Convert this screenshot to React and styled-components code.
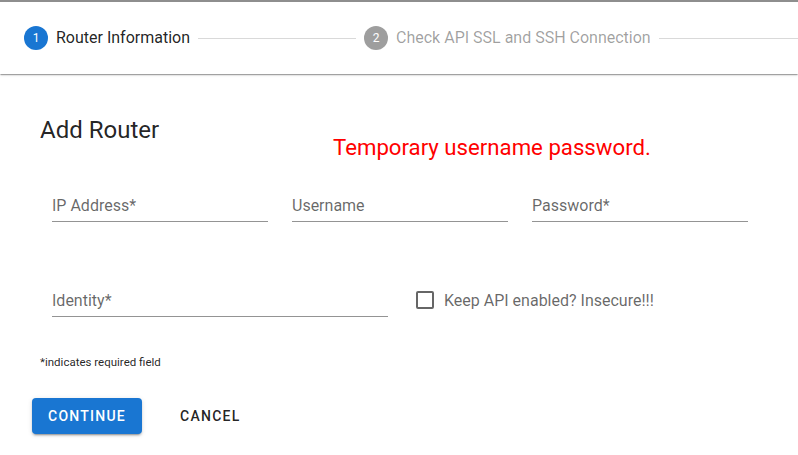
import React from "react";
import styled, { createGlobalStyle } from "styled-components";

const GlobalStyle = createGlobalStyle`
  html, body {
    margin: 0;
    padding: 0;
    background: #ffffff;
    font-family: Roboto, "Liberation Sans", sans-serif;
    overflow: hidden;
  }
`;

const Page = styled.div`
  width: 798px;
  height: 455px;
  border-top: 2px solid #8e8e8e;
  box-sizing: border-box;
  overflow: hidden;
`;

const StepperBar = styled.div`
  display: flex;
  align-items: center;
  height: 72px;
  padding: 0 0 0 24px;
  background: #fff;
  box-shadow: 0 2px 1px -1px rgba(0, 0, 0, 0.2), 0 1px 1px 0 rgba(0, 0, 0, 0.14),
    0 1px 3px 0 rgba(0, 0, 0, 0.12);
  position: relative;
`;

const Step = styled.div`
  display: flex;
  align-items: center;
  flex-shrink: 0;
`;

const StepIcon = styled.span`
  width: 24px;
  height: 24px;
  border-radius: 50%;
  background: ${({ active }) => (active ? "#1976d2" : "#9e9e9e")};
  color: #fff;
  font-size: 12px;
  display: flex;
  align-items: center;
  justify-content: center;
  margin-right: 8px;
`;

const StepLabel = styled.span`
  font-size: 16px;
  line-height: 22px;
  padding-bottom: 1px;
  color: ${({ active }) => (active ? "rgba(0, 0, 0, 0.87)" : "rgba(0, 0, 0, 0.38)")};
  white-space: nowrap;
`;

const Connector = styled.span`
  flex: ${({ grow }) => (grow ? "1 1 auto" : "0 0 158px")};
  margin: 0 ${({ grow }) => (grow ? "0" : "8px")} 0 8px;
  border-top: 1px solid #d9d9d9;
`;

const Content = styled.div`
  padding: 40px 40px 0;
`;

const Header = styled.div`
  display: grid;
  grid-template-columns: 293px 1fr;
  align-items: start;
`;

const Title = styled.h2`
  margin: 0;
  font-size: 24px;
  font-weight: 400;
  line-height: 32px;
  color: rgba(0, 0, 0, 0.87);
`;

const Notice = styled.p`
  margin: 18px 0 0;
  font-size: 22.2px;
  line-height: 30px;
  height: 32px;
  color: #ff0000;
`;

const FieldRow = styled.div`
  display: grid;
  grid-template-columns: ${({ cols }) => cols};
  gap: 24px;
  padding: 0 12px;
  margin-top: ${({ top }) => top}px;
  align-items: center;
`;

const Field = styled.div`
  padding-top: 16px;
`;

const InputArea = styled.div`
  height: 31px;
  border-bottom: 1px solid rgba(0, 0, 0, 0.42);
  display: flex;
  align-items: center;
  font-size: 16px;
  color: rgba(0, 0, 0, 0.6);
`;

const CheckLabel = styled.label`
  display: flex;
  align-items: center;
  padding-top: 14px;
  font-size: 16px;
  color: rgba(0, 0, 0, 0.6);
`;

const Box = styled.span`
  width: 14px;
  height: 14px;
  border: 2px solid rgba(0, 0, 0, 0.6);
  border-radius: 2px;
  margin: 0 10px 0 4px;
`;

const Helper = styled.p`
  margin: 38px 0 0;
  font-size: 11.5px;
  line-height: 14px;
  color: rgba(0, 0, 0, 0.87);
`;

const Actions = styled.div`
  display: flex;
  align-items: center;
  margin: 29px 0 0 -8px;
`;

const Button = styled.button`
  height: 36px;
  padding: 0 ${({ primary }) => (primary ? "16px" : "24px")};
  margin-right: 14px;
  border: none;
  border-radius: 4px;
  font-family: Roboto, "Liberation Sans", sans-serif;
  font-size: 14px;
  font-weight: 500;
  letter-spacing: 1.25px;
  text-transform: uppercase;
  background: ${({ primary }) => (primary ? "#1976d2" : "transparent")};
  color: ${({ primary }) => (primary ? "#fff" : "rgba(0, 0, 0, 0.87)")};
  box-shadow: ${({ primary }) =>
    primary
      ? "0 3px 1px -2px rgba(0,0,0,0.2), 0 2px 2px 0 rgba(0,0,0,0.14), 0 1px 5px 0 rgba(0,0,0,0.12)"
      : "none"};
`;

const TextField = ({ label }) => (
  <Field>
    <InputArea>{label}</InputArea>
  </Field>
);

const App = () => (
  <Page>
    <GlobalStyle />
    <StepperBar>
      <Step>
        <StepIcon active>1</StepIcon>
        <StepLabel active>Router Information</StepLabel>
      </Step>
      <Connector />
      <Step>
        <StepIcon>2</StepIcon>
        <StepLabel>Check API SSL and SSH Connection</StepLabel>
      </Step>
      <Connector grow />
    </StepperBar>
    <Content>
      <Header>
        <Title>Add Router</Title>
        <Notice>Temporary username password.</Notice>
      </Header>
      <FieldRow cols="216px 216px 216px" top={10}>
        <TextField label="IP Address*" />
        <TextField label="Username" />
        <TextField label="Password*" />
      </FieldRow>
      <FieldRow cols="336px 1fr" top={47}>
        <TextField label="Identity*" />
        <CheckLabel>
          <Box />
          Keep API enabled? Insecure!!!
        </CheckLabel>
      </FieldRow>
      <Helper>*indicates required field</Helper>
      <Actions>
        <Button primary>Continue</Button>
        <Button>Cancel</Button>
      </Actions>
    </Content>
  </Page>
);

export default App;
